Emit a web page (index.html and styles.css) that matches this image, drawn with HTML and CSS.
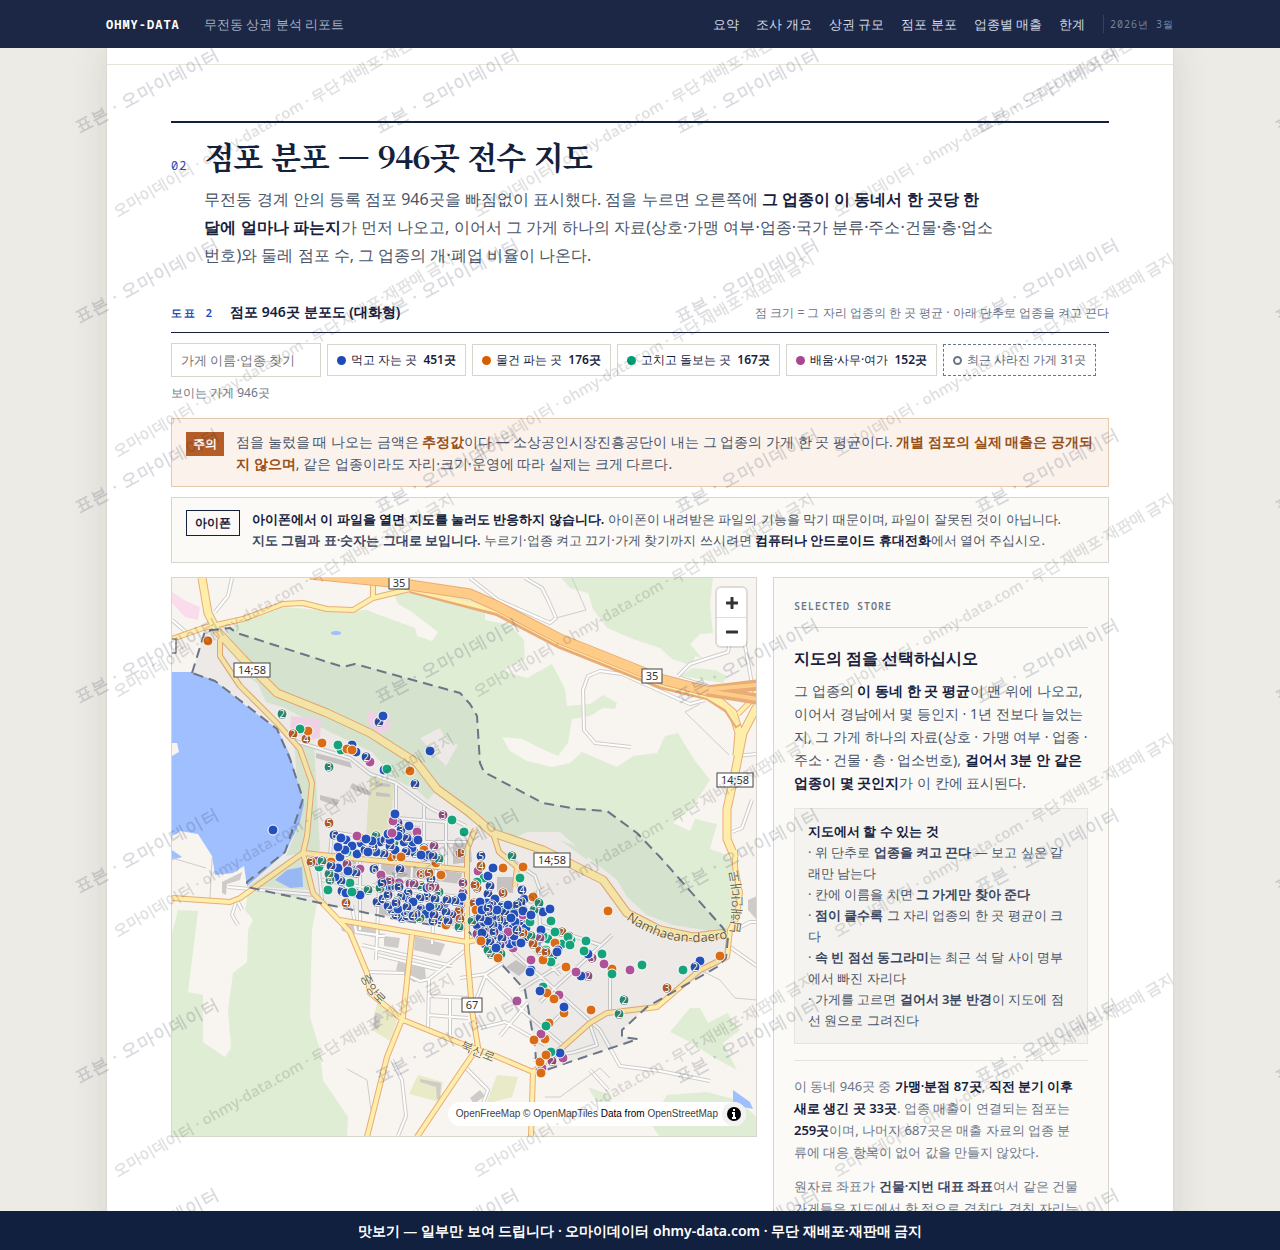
FILE: index.html
```
<!DOCTYPE html>
<html lang="ko">
<head>
  <meta charset="UTF-8">
  <meta name="viewport" content="width=device-width, initial-scale=1.0">
  <title>무전동 상권 분석 리포트</title>
  <link rel="stylesheet" href="styles.css">
</head>
<body>
  <header class="topbar">
    <div class="topbar-inner">
      <span class="brand">OHMY-DATA</span>
      <span class="report-name">무전동 상권 분석 리포트</span>
      <nav class="topnav">
        <a href="#summary">요약</a>
        <a href="#about">조사 개요</a>
        <a href="#size">상권 규모</a>
        <a href="#stores">점포 분포</a>
        <a href="#sales">업종별 매출</a>
        <a href="#limits">한계</a>
      </nav>
      <span class="date">2026년 3월</span>
    </div>
  </header>

  <main class="scroll">
    <div class="sheet">
      <section class="stores" id="stores">
        <div class="section-head">
          <span class="section-no">02</span>
          <div>
            <h2>점포 분포 — 946곳 전수 지도</h2>
            <p class="lead">무전동 경계 안의 등록 점포 946곳을 빠짐없이 표시했다. 점을 누르면 오른쪽에 <b>그 업종이 이 동네서 한 곳당 한 달에 얼마나 파는지</b>가 먼저 나오고, 이어서 그 가게 하나의 자료(상호·가맹 여부·업종·국가 분류·주소·건물·층·업소번호)와 둘레 점포 수, 그 업종의 개·폐업 비율이 나온다.</p>
          </div>
        </div>

        <div class="figure-head">
          <span class="figure-no">도표 2</span>
          <h3>점포 946곳 분포도 (대화형)</h3>
          <span class="figure-note">점 크기 = 그 자리 업종의 한 곳 평균 · 아래 단추로 업종을 켜고 끈다</span>
        </div>

        <div class="filters">
          <input type="text" class="search" placeholder="가게 이름·업종 찾기" aria-label="가게 이름·업종 찾기">
          <button class="chip"><i class="dot blue"></i>먹고 자는 곳 <b>451곳</b></button>
          <button class="chip"><i class="dot orange"></i>물건 파는 곳 <b>176곳</b></button>
          <button class="chip"><i class="dot green"></i>고치고 돌보는 곳 <b>167곳</b></button>
          <button class="chip"><i class="dot purple"></i>배움·사무·여가 <b>152곳</b></button>
          <button class="chip gone"><i class="dot ring"></i>최근 사라진 가게 31곳</button>
          <span class="visible-count">보이는 가게 946곳</span>
        </div>

        <div class="callout warn">
          <span class="tag">주의</span>
          <p>점을 눌렀을 때 나오는 금액은 <b>추정값</b>이다 — 소상공인시장진흥공단이 내는 그 업종의 가게 한 곳 평균이다. <b>개별 점포의 실제 매출은 공개되지 않으며</b>, 같은 업종이라도 자리·크기·운영에 따라 실제는 크게 다르다.</p>
        </div>

        <div class="callout phone">
          <span class="tag">아이폰</span>
          <p><b>아이폰에서 이 파일을 열면 지도를 눌러도 반응하지 않습니다.</b> 아이폰이 내려받은 파일의 기능을 막기 때문이며, 파일이 잘못된 것이 아닙니다.<br><b class="soft">지도 그림과 표·숫자는 그대로 보입니다.</b> 누르기·업종 켜고 끄기·가게 찾기까지 쓰시려면 <b>컴퓨터나 안드로이드 휴대전화</b>에서 열어 주십시오.</p>
        </div>

        <div class="map-grid">
          <div class="map">
            <svg class="map-canvas" viewBox="172 578 584 558" preserveAspectRatio="xMidYMid slice" role="img" aria-label="무전동 점포 지도">
              <rect x="172" y="578" width="584" height="558" fill="#f8f4f0"/>
              <!-- woods -->
              <g fill="#e0edd5">
                <path d="M225,630 L243,622 285,607 330,611 367,610 385,617 415,628 417,636 432,641 438,632 430,626 412,612 398,604 394,594 415,590 440,589 485,606 485,620 510,625 524,640 525,659 503,671 527,678 552,664 565,689 567,706 590,704 603,695 617,703 615,709 603,708 590,716 572,719 568,743 558,756 540,748 522,739 502,737 510,751 527,761 552,767 570,763 582,752 617,767 633,756 657,753 665,736 678,733 693,758 710,780 693,806 673,823 690,831 695,819 717,824 710,849 727,855 737,870 740,900 730,927 717,932 673,925 647,915 627,897 617,880 587,856 560,832 527,832 510,840 470,820 437,789 417,763 370,733 327,713 277,693 243,659z"/>
                <path d="M560,576 570,588 588,593 593,609 607,628 633,639 660,648 672,659 693,666 695,656 702,658 690,644 700,634 713,633 710,606 713,576z"/>
                <path d="M680,676 693,668 715,670 727,676 723,683z"/>
                <path d="M178,910 198,911 188,992 203,995 203,1042 225,1057 231,1048 228,1010 233,973 247,962 248,930 253,920 245,910 248,893 280,890 317,903 312,930 310,1017 320,1050 323,1080 348,1117 347,1137 172,1137 172,933z"/>
                <path d="M670,1032 690,1008 700,1008 708,1023 727,1013 740,1030 723,1043 737,1070 713,1057 690,1042z"/>
                <path d="M667,1095 707,1092 737,1100 757,1117 757,1137 660,1137 650,1123z M588,1087 610,1095 612,1105 600,1108z"/>
                <path d="M238,668 258,684 266,702 285,708 326,730 372,752 396,780 417,790 428,800 437,789 417,763 370,733 327,713 277,693z M294,740 314,745 320,850 286,856 300,822z M560,840 590,852 587,860z"/>
                <path d="M248,886 300,852 306,862 312,890z"/>
              </g>
              <path d="M420,738 440,728 446,740 458,745 446,766 432,752z" fill="#f8f4f0"/>
              <g fill="#e9eac8">
                <path d="M370,776 394,784 390,840 366,836z M377,1003 398,1018 390,1041 372,1030z M418,1075 443,1082 440,1102 409,1094z M497,1075 518,1077 512,1097 486,1104z"/>
              </g>
              <g fill="#fadcec">
                <path d="M172,592 186,601 200,607 198,620 185,617 172,603z M291,716 321,719 320,738 308,740 290,732z M368,711 390,716 389,731 378,734 367,722z"/>
              </g>
              <!-- water -->
              <g fill="#a0bfff">
                <path d="M172,672 192,672 215,681 245,705 277,729 290,755 300,790 304,804 300,822 285,853 247,886 244,866 233,873 215,875 212,856 198,834 180,831 172,836z"/>
                <path d="M275,880 287,870 302,867 303,887 290,888z M733,1090 750,1102 753,1109 733,1105z M172,850 182,857 172,860z"/>
                <ellipse cx="336" cy="633" rx="5" ry="2"/>
              </g>
              <path d="M172,743 177,743 179,752 172,756z" fill="#f8f4f0"/>
              <g fill="#cfcbc9">
                <path d="M222,882 242,872 240,880 227,884 226,895 222,893z M375,1012 382,1015 378,1030 373,1027z M420,1079 441,1083 440,1099 437,1099 436,1087 420,1082z M497,877 514,877 513,893 497,892z M516,960 528,968 519,976 506,967z M470,1098 480,1090 485,1096 474,1104z M453,840 470,840 472,862 453,864z"/>
                <path d="M316,753 350,762 352,768 316,758z M320,795 340,800 336,806 320,800z M352,783 372,792 370,796 350,788z M376,782 390,784 390,787 376,786z M376,792 390,794 390,797 376,796z M398,962 425,968 426,980 414,982 396,970z M340,922 380,930 378,938 342,931z M384,936 400,938 398,948 384,946z M415,936 445,944 440,956 414,950z M748,900 757,896 757,920 748,910z M378,900 466,916 466,928 378,914z M382,862 462,873 460,884 382,874z M400,824 420,826 420,838 400,836z M334,858 356,861 356,878 334,876z"/>
              </g>

              <!-- side streets -->
              <g class="lane-case">
                <path id="lanes" d="M232,578 228,596 215,612 M172,620 186,632 M292,740 350,758 370,774 396,783 430,808 466,826 M396,782 396,800 396,912 M332,832 398,842 466,842 M332,832 330,856 M396,818 446,822 M424,806 424,842 M446,822 446,870 M318,862 322,900 M360,862 360,930 M380,862 376,960 M412,866 410,910 M436,870 432,944 M372,885 466,898 M322,880 466,905 M352,905 356,932 385,936 M362,945 452,966 M378,955 440,970 M368,972 404,973 M429,979 466,950 M429,979 428,1030 M429,996 468,998 M428,1015 468,1018 M450,998 450,1035 M405,974 420,981 429,979 M228,887 315,895 M236,902 232,915 238,925 M238,902 242,910 M392,1060 402,1080 406,1116 398,1136 M460,978 486,974 503,963 M484,974 522,1010 566,1048 M480,1028 505,1022 545,1045 M500,1036 528,1002 M486,974 476,1000 M500,940 600,1030 620,1066 660,1071 710,1081 M535,950 560,975 M540,1002 612,935 M520,990 560,965 M560,1015 540,1035 M610,970 610,1010 M590,1025 597,1045 575,1052 533,1060 M497,850 535,876 540,890 M538,890 540,925 600,945 M727,945 757,966 M735,930 750,922 757,922 M732,832 742,828 752,800 M736,756 757,754 M678,676 690,664 728,652 730,640 M680,678 710,687 754,685 M744,640 752,684 M631,747 595,743 584,730 583,690 588,676 600,671 622,674 676,698 690,704 705,700 M470,578 498,600 550,623 556,618 548,600 542,588 525,578 M466,1068 488,1090 482,1106 470,1125 M608,1090 590,1070"/>
              </g>
              <use href="#lanes" class="lane-fill"/>
              <path class="trail" d="M556,618 586,610 572,578 M700,704 685,712 729,755 M347,1069 367,1080 371,1110 M700,970 720,980 735,998 757,1000 M545,1097 560,1097 600,1068 610,1078 M172,858 206,868 M212,858 210,898"/>

              <!-- yellow and trunk roads -->
              <g class="road-case">
                <path id="mains" d="M303,853 240,898 230,902 172,898 M303,853 467,870 M340,920 467,942 M220,639 220,656 240,686 277,723 300,749 312,783 307,836 303,853 313,893 350,932 367,973 370,993 403,1020 460,1043 493,1055 533,1072 531,1137 M475,829 467,850 467,950 472,1010 478,1047 460,1073 417,1137 M412,935 403,1017 387,1057 377,1097 367,1137 M467,942 492,936 M493,833 499,852 517,867 515,887 M172,639 203,628 243,619 283,604 303,603 327,609 353,610 373,598 410,589 M373,598 373,584 M735,850 735,867 740,893 737,917 730,930 727,957 700,970 657,1007 607,1013 590,1023 563,1047 533,1072 M757,690 750,702 738,714"/>
              </g>
              <g class="road-case wide">
                <path id="trunk" d="M202,578 208,613 217,631 243,659 277,693 327,713 370,733 417,763 437,789 470,813 493,833 543,850 603,880 627,913 660,930 693,937 727,933 M757,706 743,733 735,773 727,809 727,839 735,858 M713,696 733,713 739,733 737,756"/>
              </g>
              <use href="#mains" class="road-fill"/>
              <use href="#trunk" class="road-fill wide"/>
              <path d="M410,590 497,613 560,646 610,666 660,686 707,697 727,710 738,727" class="road-case"/>
              <path d="M410,589 497,611 560,644 610,664 660,684 707,696 727,708 738,725" class="road-fill"/>
              <path d="M310,574 390,582 470,594 497,606 560,639 610,659 660,679 707,691 757,699 M707,691 757,685" class="motor-case"/>
              <path d="M310,574 390,582 470,594 497,606 560,639 610,659 660,679 707,691" class="motor-fill"/>
              <path d="M700,690 757,699 M700,690 757,685" class="motor-thin"/>

              <path class="district" d="M192,673 205,631 230,628 237,633 343,667 355,664 460,693 470,704 477,716 480,763 484,772 543,803 577,809 607,811 637,833 660,857 723,928 728,937 726,958 717,967 647,1007 622,1030 622,1037 638,1039 537,1073 535,1047 525,990 505,968 467,930 400,920 320,903 247,887 247,882 285,852 303,799 290,759 277,729 215,681z"/>

              <!-- road labels -->
              <path id="name1" d="M626,919 Q660,944 700,942 T746,926" fill="none"/>
              <path id="name2" d="M738,934 Q745,900 735,862" fill="none"/>
              <path id="name3" d="M361,976 Q370,1000 400,1018" fill="none"/>
              <path id="name4" d="M460,1048 L504,1066" fill="none"/>
              <g class="road-name">
                <text><textPath href="#name1">Namhaean-daero</textPath></text>
                <text><textPath href="#name2">남해안대로</textPath></text>
                <text class="small"><textPath href="#name3">중앙로</textPath></text>
                <text class="small"><textPath href="#name4">북신로</textPath></text>
              </g>
              <g class="shield">
                <rect x="234" y="663" width="36" height="14"/><text x="252" y="674">14;58</text>
                <rect x="534" y="853" width="36" height="14"/><text x="552" y="864">14;58</text>
                <rect x="717" y="773" width="36" height="14"/><text x="735" y="784">14;58</text>
                <rect x="389" y="575" width="20" height="14"/><text x="399" y="587">35</text>
                <rect x="642" y="669" width="20" height="14"/><text x="652" y="680">35</text>
                <rect x="462" y="998" width="20" height="14"/><text x="472" y="1009">67</text>
                <rect x="160" y="639" width="16" height="14"/>
              </g>
              <g id="pins" class="pins"></g>
            </svg>
            <div class="zoom">
              <button aria-label="확대"><svg width="12" height="12"><path d="M6,1V11M1,6H11"/></svg></button>
              <button aria-label="축소"><svg width="12" height="12"><path d="M1,6H11"/></svg></button>
            </div>
            <div class="credit">
              <a href="#ofm">OpenFreeMap</a> <a href="#omt">© OpenMapTiles</a> Data from <a href="#osm">OpenStreetMap</a>
              <button class="info" aria-label="지도 출처"><svg width="24" height="24"><circle cx="12" cy="12" r="7"/><path d="M12,7V9M10,11H12V16M10,16H14"/></svg></button>
            </div>
          </div>

          <aside class="panel">
            <div class="panel-label">SELECTED STORE</div>
            <h4>지도의 점을 선택하십시오</h4>
            <p class="intro">그 업종의 <b>이 동네 한 곳 평균</b>이 맨 위에 나오고, 이어서 경남에서 몇 등인지 · 1년 전보다 늘었는지, 그 가게 하나의 자료(상호 · 가맹 여부 · 업종 · 주소 · 건물 · 층 · 업소번호), <b>걸어서 3분 안 같은 업종이 몇 곳인지</b>가 이 칸에 표시된다.</p>
            <div class="howto">
              <b class="howto-title">지도에서 할 수 있는 것</b>
              <p>· 위 단추로 <b>업종을 켜고 끈다</b> — 보고 싶은 갈래만 남는다</p>
              <p>· 칸에 이름을 치면 <b>그 가게만 찾아 준다</b></p>
              <p>· <b>점이 클수록</b> 그 자리 업종의 한 곳 평균이 크다</p>
              <p>· <b>속 빈 점선 동그라미</b>는 최근 석 달 사이 명부에서 빠진 자리다</p>
              <p>· 가게를 고르면 <b>걸어서 3분 반경</b>이 지도에 점선 원으로 그려진다</p>
            </div>
            <div class="panel-foot">
              <p>이 동네 946곳 중 <b>가맹·분점 87곳</b>, <b>직전 분기 이후 새로 생긴 곳 33곳</b>. 업종 매출이 연결되는 점포는 <b>259곳</b>이며, 나머지 687곳은 매출 자료의 업종 분류에 대응 항목이 없어 값을 만들지 않았다.</p>
              <p>원자료 좌표가 <b class="soft">건물·지번 대표 좌표</b>여서 같은 건물 가게들은 지도에서 한 점으로 겹친다. 겹친 자리는 숫자로 표시된다.</p>
            </div>
          </aside>
        </div>
      </section>

      <svg class="mark sheet-mark" aria-hidden="true">
        <defs>
          <pattern id="markLong" y="-56" width="360" height="240" patternUnits="userSpaceOnUse">
            <text x="176" y="128" transform="rotate(-30 176 122)">오마이데이터 · ohmy-data.com · 무단 재배포·재판매 금지</text>
          </pattern>
        </defs>
        <rect width="100%" height="100%" fill="url(#markLong)"/>
      </svg>
    </div>
  </main>

  <svg class="mark page-mark" aria-hidden="true">
    <defs>
      <pattern id="markShort" width="300" height="190" patternUnits="userSpaceOnUse">
        <text x="147" y="96" transform="rotate(-28 147 90)">표본 · 오마이데이터</text>
      </pattern>
    </defs>
    <rect width="100%" height="100%" fill="url(#markShort)"/>
  </svg>

  <footer class="sample-bar">맛보기 — 일부만 보여 드립니다 · 오마이데이터 ohmy-data.com · 무단 재배포·재판매 금지</footer>

  <script src="map.js"></script>
</body>
</html>
```
FILE: styles.css
```
* {
  box-sizing: border-box;
}

body {
  margin: 0;
  height: 100vh;
  display: flex;
  flex-direction: column;
  overflow: hidden;
  background: #edebe6;
  color: #4a5568;
  font-family: "Noto Sans", sans-serif;
  font-size: 14px;
}

h2, h3, h4, p {
  margin: 0;
}

b {
  font-weight: 600;
  color: #14213d;
}

button, input {
  font: inherit;
}

a {
  color: inherit;
  text-decoration: none;
}

/* header */
.topbar {
  position: relative;
  z-index: 20;
  flex: none;
  background: #1b2744;
}

.topbar-inner {
  max-width: 1068px;
  height: 48px;
  margin: 0 auto;
  display: flex;
  align-items: center;
}

.brand {
  font-family: "Noto Sans Mono", "DejaVu Sans Mono", monospace;
  font-size: 12px;
  font-weight: 700;
  letter-spacing: 1px;
  color: #fff;
}

.report-name {
  margin-left: 24px;
  font-size: 13px;
  color: #a7b1c6;
}

.topnav {
  margin-left: auto;
  display: flex;
  gap: 17px;
  font-size: 13px;
  color: #d3d9e6;
}

.date {
  margin-left: 18px;
  padding-left: 6px;
  border-left: 1px solid #35425f;
  font-family: "Noto Sans Mono", monospace;
  font-size: 10px;
  letter-spacing: 1px;
  line-height: 18px;
  color: #7482a0;
}

/* paper */
.scroll {
  flex: 1;
  min-height: 0;
  overflow-y: auto;
  scrollbar-width: none;
}

.sheet {
  position: relative;
  max-width: 1068px;
  margin: 0 auto;
  padding-top: 16px;
  background: #fff;
  border: 1px solid #dcd9d0;
  border-top: 0;
  box-shadow: 0 0 36px rgba(60, 55, 40, 0.12);
}

.stores {
  border-top: 1px solid #e5e3da;
  padding: 56px 64px 64px;
}

.section-head {
  display: flex;
  align-items: flex-start;
  gap: 17px;
  border-top: 2px solid #14213d;
  padding-top: 9px;
}

.section-no {
  margin-top: 26px;
  font-family: "Noto Sans Mono", monospace;
  font-size: 12px;
  line-height: 16px;
  letter-spacing: 1px;
  color: #1d4ab8;
}

h2 {
  font-family: "Noto Serif CJK KR", serif;
  font-size: 31px;
  line-height: 48px;
  font-weight: 700;
  letter-spacing: -1px;
  color: #14213d;
}

.lead {
  max-width: 792px;
  margin-top: 5px;
  font-size: 16px;
  line-height: 28px;
}

.figure-head {
  display: flex;
  align-items: baseline;
  margin-top: 32px;
  padding-bottom: 9px;
  border-bottom: 1px solid #14213d;
}

.figure-no {
  font-family: "Noto Sans Mono", monospace;
  font-size: 11px;
  font-weight: 600;
  letter-spacing: 2px;
  color: #1d4ab8;
}

h3 {
  margin-left: 16px;
  font-size: 14px;
  line-height: 22px;
  font-weight: 600;
  color: #14213d;
}

.figure-note {
  margin-left: auto;
  font-size: 12px;
  color: #6b7588;
}

.filters {
  display: flex;
  flex-wrap: wrap;
  align-items: center;
  gap: 6px;
  margin-top: 10px;
  font-size: 12px;
}

.search {
  width: 150px;
  height: 34px;
  padding: 0 9px;
  border: 1px solid #d8d5cc;
  background: #fff;
  font-size: 13px;
}

.search::placeholder {
  color: #757575;
}

.chip {
  display: flex;
  align-items: center;
  height: 32px;
  padding: 0 9px;
  border: 1px solid #d8d5cc;
  background: #fff;
  color: #14213d;
  white-space: pre;
}

.chip b {
  margin-left: 3px;
}

.chip.gone {
  border: 1px dashed #6b7588;
  color: #5c667a;
}

.dot {
  width: 9px;
  height: 9px;
  margin-right: 5px;
  border-radius: 50%;
}

.blue { background: #1d4ab8; }
.orange { background: #d55e00; }
.green { background: #009e73; }
.purple { background: #a8478f; }
.ring { border: 2px solid #6b7588; }

.visible-count {
  flex-basis: 100%;
  font-size: 12px;
  line-height: 20px;
  color: #6b7588;
}

.callout {
  display: flex;
  align-items: flex-start;
  gap: 12px;
  padding: 12px 14px 11px;
  border: 1px solid #d8d5cc;
  background: #fbfaf6;
}

.callout .tag {
  flex: none;
  margin-top: 1px;
  padding: 0 8px;
  border: 1px solid #14213d;
  font-size: 12px;
  line-height: 24px;
  font-weight: 600;
  color: #14213d;
}

.callout.warn {
  margin-top: 15px;
  border-color: #e6c8ad;
  background: #fcf2ec;
  font-size: 14px;
  line-height: 22px;
}

.callout.warn .tag {
  padding: 0 6px;
  border-color: #b55d26;
  background: #b55d26;
  line-height: 22px;
  color: #fff;
}

.callout.warn b {
  color: #96501a;
}

.callout.phone {
  margin-top: 10px;
  padding-top: 11px;
  font-size: 13px;
  line-height: 21px;
}

.soft {
  color: #3a4660;
}

/* map and side panel */
.map-grid {
  display: grid;
  grid-template-columns: 1fr 336px;
  align-items: start;
  gap: 16px;
  margin-top: 14px;
}

.map {
  position: relative;
  height: 560px;
  border: 1px solid #d8d5cc;
  overflow: hidden;
}

.map-canvas {
  display: block;
  width: 100%;
  height: 100%;
}

.map-canvas path {
  stroke-linejoin: round;
}

.lane-case { fill: none; stroke: #cfcdca; stroke-width: 4; }
.lane-fill { fill: none; stroke: #fff; stroke-width: 2; }
.trail { fill: none; stroke: #cfcdca; stroke-width: 1; }
.road-case { fill: none; stroke: #e9ac77; stroke-width: 6; }
.road-case.wide { stroke-width: 9; }
.road-fill { fill: none; stroke: #ffeeaa; stroke-width: 4; }
.road-fill.wide { stroke-width: 7; }
.motor-case { fill: none; stroke: #e9ac77; stroke-width: 11; }
.motor-fill { fill: none; stroke: #ffcc88; stroke-width: 9; }
.motor-thin { fill: none; stroke: #ffcc88; stroke-width: 4; }

.district {
  fill: rgba(20, 33, 61, 0.05);
  stroke: #6b7588;
  stroke-width: 2;
  stroke-dasharray: 10 6;
}

.road-name text {
  font-size: 13px;
  fill: #665f4c;
  stroke: #fff8dc;
  stroke-width: 1px;
  paint-order: stroke;
}

.road-name .small {
  font-size: 12px;
}

.shield rect {
  fill: #fff;
  stroke: #444;
}

.shield text {
  font-size: 11px;
  text-anchor: middle;
  fill: #333;
}

.pins circle {
  stroke: #fff;
  stroke-width: 1px;
}

.pins text {
  font-size: 10px;
  text-anchor: middle;
  fill: #fff;
  stroke: rgba(60, 60, 60, 0.5);
  stroke-width: 1px;
  paint-order: stroke;
}

.zoom {
  position: absolute;
  top: 10px;
  right: 10px;
  width: 29px;
  border-radius: 4px;
  background: #fff;
  box-shadow: 0 0 0 2px rgba(0, 0, 0, 0.1);
}

.zoom button {
  display: flex;
  align-items: center;
  justify-content: center;
  width: 29px;
  height: 29px;
  padding: 0;
  border: 0;
  background: none;
}

.zoom button + button {
  border-top: 1px solid #ddd;
}

.zoom path {
  fill: none;
  stroke: #333;
  stroke-width: 3;
  stroke-linecap: round;
}

.credit {
  position: absolute;
  right: 10px;
  bottom: 10px;
  padding: 2px 28px 2px 8px;
  border-radius: 12px;
  background: #fff;
  font-family: "Liberation Sans", Arial, sans-serif;
  font-size: 10px;
  line-height: 20px;
  color: #000;
}

.credit a {
  color: #404040;
}

.info {
  position: absolute;
  top: 0;
  right: 0;
  width: 24px;
  height: 24px;
  padding: 0;
  border: 0;
  border-radius: 12px;
  background: #f2f2f2;
}

.info svg {
  display: block;
}

.info path {
  fill: none;
  stroke: #fff;
  stroke-width: 2;
}

.panel {
  padding: 20px;
  border: 1px solid #d8d5cc;
  background: #fbfaf6;
}

.panel-label {
  padding-bottom: 12px;
  border-bottom: 1px solid #d8d5cc;
  font-family: "Noto Sans Mono", monospace;
  font-size: 10px;
  line-height: 17px;
  font-weight: 600;
  letter-spacing: 1px;
  color: #6b7588;
}

h4 {
  margin-top: 18px;
  font-size: 16px;
  line-height: 24px;
  font-weight: 600;
  color: #14213d;
}

.intro {
  margin-top: 9px;
  font-size: 14px;
  line-height: 23px;
}

.howto {
  margin-top: 14px;
  padding: 12px 13px;
  border: 1px solid #e5e3da;
  background: #f4f3ef;
  font-size: 13px;
  line-height: 21px;
}

.howto p b {
  color: #3a4660;
}

.panel-foot {
  margin-top: 16px;
  padding-top: 14px;
  border-top: 1px solid #e5e3da;
  font-size: 13px;
  line-height: 22px;
  color: #6b7588;
}

.panel-foot p {
  padding-right: 8px;
}

.panel-foot p + p {
  margin-top: 12px;
}

/* watermarks */
.mark {
  position: absolute;
  left: 0;
  width: 100%;
  pointer-events: none;
}

.mark text {
  text-anchor: middle;
  font-weight: 600;
}

.sheet-mark {
  top: 0;
  height: 100%;
}

.sheet-mark text {
  font-size: 15px;
  fill: rgba(0, 0, 0, 0.12);
}

.page-mark {
  top: 0;
  height: 100%;
  z-index: 10;
}

.page-mark text {
  font-size: 17px;
  letter-spacing: 1px;
  fill: rgba(20, 33, 61, 0.16);
}

.sample-bar {
  position: relative;
  z-index: 20;
  flex: none;
  background: #11203f;
  color: #fff;
  font-size: 14px;
  line-height: 39px;
  font-weight: 600;
  text-align: center;
}
```
FILE: map.js
```
// x,y or x,y,count for places where several stores share one spot
const pins = {
  b: `383,716 379,722,2 352,745 356,752 366,757,2 384,770 430,751 415,784,2 273,830
    395,814 398,823,8 409,826 407,838,2 417,838,2 334,835,6 341,838 346,840 352,846 366,839 372,841 380,842 385,840,2 390,846,2
    338,847 345,850 357,854 365,850,2 368,852 376,852 384,854,2 390,840 398,836 404,842 413,842 418,840 415,853,2 421,855 429,855 433,856,2
    331,866,2 338,868 344,868,2 348,871 356,873,2 357,870,2 335,877 341,881,2 342,891,2 346,893 355,893 360,895 374,869,6 400,869,2 382,883,5 390,887,10 399,887,3
    377,902,2 388,906,2 396,903,3 408,893,5 407,907,2 407,916,4 396,915,4 405,912,6 431,879,4 420,898,2 427,897,3 435,899,2 421,909,2 430,907 434,915,2
    447,900,2 455,901,2 444,905 446,912,2 452,915,2 441,920,4 433,921,4 459,903 460,910 448,921,2 462,897
    481,856,5 493,868 488,876 490,886,2 488,894,2 487,903 482,910 486,914,3 492,918 497,910 502,906,3 508,905 493,925,2 486,928,6 482,933 489,938,3 498,936,2
    505,930,6 513,928 507,922,3 515,922 500,945,2 491,946 485,944 510,944 516,942 521,943 522,890,4 524,899 521,902,2 519,908 514,914 523,911 531,915 543,912 550,909
    541,930 522,922,3 526,928 537,942 530,972 531,970 558,950 540,991 564,1007 560,1053 588,954 592,958 557,952 581,976 695,967,2 700,961 478,915 484,922 495,899 503,916,2 509,914 477,925 514,936 507,938 496,948
    388,834 401,830,3 412,848 424,848,2 361,843 373,847,4 395,850 406,852,2 340,857 392,910,2 401,897,2 413,902 416,914,2 426,914 388,895,3 413,916,4 439,908,2 398,909 402,918,2 427,888 409,900,6 383,899,4
    480,902 492,905,2 499,920,4 488,921 494,932,3 502,938,2 509,929 480,940,2 505,912,2 517,930,4 488,908,5 498,928 484,935,2 517,905,3 511,918 490,942,2 527,938,3 491,912,3 480,918,2 501,925,2`,
  o: `208,641 293,734,2 306,739,4 308,731 322,743 347,749 352,750 410,771 329,823,5 359,837 311,862,3 331,862 397,856,2 401,857 391,857 346,903,4
    421,874,8 429,873,5 441,875 460,853,19 460,919,4 459,911,3 446,925 459,925,2 481,866,4 503,868 523,867 503,893,9 533,897 475,885,3 477,888,3 474,903,3 476,910
    608,911 523,933,3 496,928,5 562,932,2 555,943 533,944,2 540,950,2 546,952,3 498,958 543,960 566,967 612,969 547,993 554,999 591,1010 564,1013 549,1023 545,1039 534,1040 546,1055 540,1062 541,1073 720,956 667,988,3 481,941 436,863 424,850`,
  g: `282,714,2 300,729 338,745 341,750 329,767,3 387,769 452,820 464,832 376,836,2 394,843,2 347,852,3 439,859,2 322,861,2 319,867 330,880,4 328,890 329,874,2 350,883 352,892 368,890,2 380,888,5
    421,886,5 397,901,3 420,918,5 439,892,3 459,927,2 394,908 433,905,2 484,878 477,882 512,856,2 520,878 539,903,2 534,910,2 530,922 551,921 509,907,2 555,932 531,936,2 548,939 570,945 586,941 562,944 602,954 584,951 546,950 553,956,2 551,962 571,940 612,974 642,965 683,970 624,1000,2 619,1014,2 543,987 546,1026 551,1052 491,954,2 472,921,2 501,954,2 543,936 488,950,2 568,937`,
  p: `370,762 443,815,3 393,821 392,833 357,836 417,832 339,849 434,846,2 317,861 347,864,2 354,870,2 381,875 390,881,3 399,883 410,884,2 414,884,2 430,887,6 435,887,7 463,883,3 463,893,3 360,869 424,857,3
    477,934,2 503,941 513,948 540,938,2 531,960 576,972 588,976,2 604,964 592,958,3 630,970 559,995 517,1001 541,1034 563,1058 552,1061,2 542,1068 569,936 478,871 480,906 508,932 523,915`
};

const colors = { b: "#2450bb", o: "#d96c14", g: "#16a37c", p: "#ad5297" };
const shared = { b: "#2a4aa5", o: "#b9581a", g: "#23896a", p: "#94487f" };
const ns = "http://www.w3.org/2000/svg";
const layer = document.getElementById("pins");

const all = [];
Object.keys(pins).forEach(kind => {
  pins[kind].trim().split(/\s+/).forEach(item => {
    const [x, y, n] = item.split(",");
    all.push({ kind, x: +x, y: +y, n });
  });
});

// crowded blocks mix all kinds, so shuffle them by position
all.sort((a, b) => (a.x * 7 + a.y * 13) % 97 - (b.x * 7 + b.y * 13) % 97);

all.forEach(p => {
  const c = document.createElementNS(ns, "circle");
  c.setAttribute("cx", p.x);
  c.setAttribute("cy", p.y);
  c.setAttribute("r", 5);
  c.setAttribute("fill", (p.n ? shared : colors)[p.kind]);
  layer.appendChild(c);
  if (p.n) {
    const t = document.createElementNS(ns, "text");
    t.setAttribute("x", p.x);
    t.setAttribute("y", p.y + 4);
    t.textContent = p.n;
    layer.appendChild(t);
  }
});
```
